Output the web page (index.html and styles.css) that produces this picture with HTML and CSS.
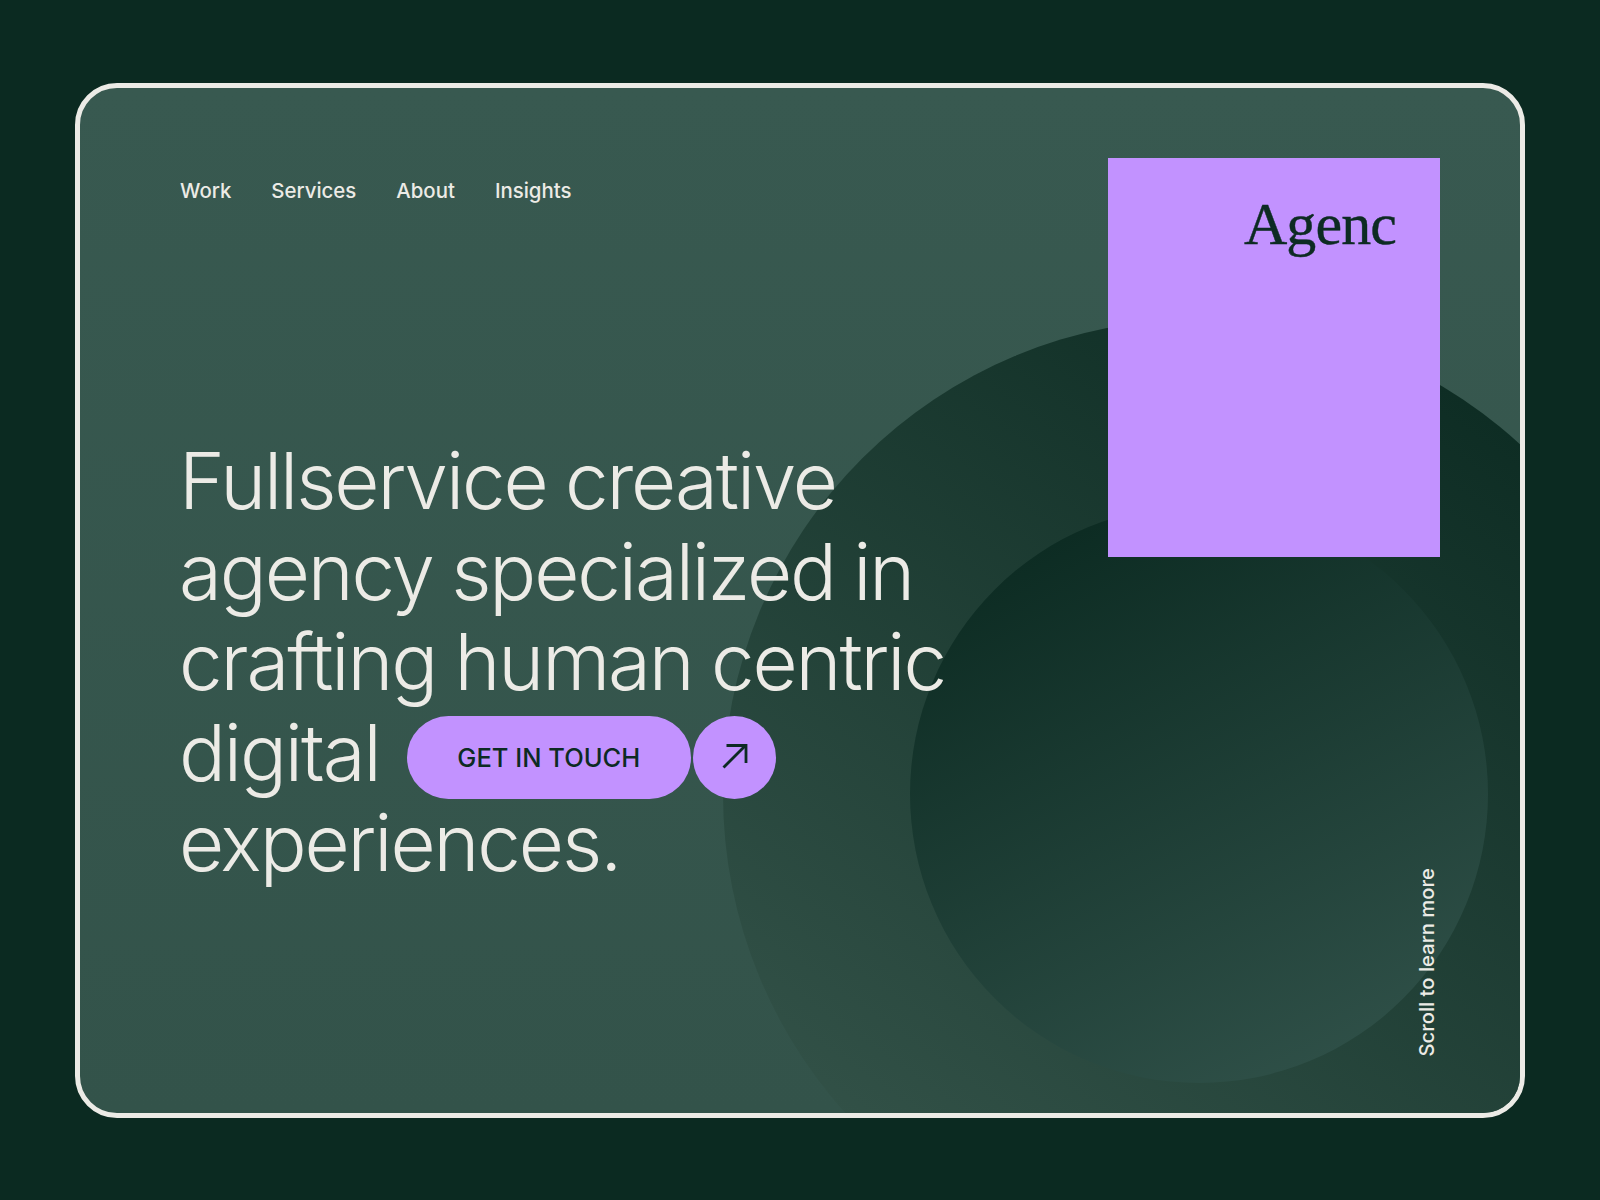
FILE: index.html
```html
<!DOCTYPE html>
<html lang="en">
<head>
  <meta charset="UTF-8" />
  <title>Agenc</title>
  <link rel="stylesheet" href="styles.css">
</head>
<body>
  <main class="card">
    <div class="circle circle-outer"></div>
    <div class="circle circle-inner"></div>

    <div class="left">
      <nav class="nav">
        <a href="#">Work</a>
        <a href="#">Services</a>
        <a href="#">About</a>
        <a href="#">Insights</a>
      </nav>
      <h1 class="headline">
        Fullservice creative agency specialized in crafting human centric digital
        <span class="cta">
          <a class="cta-label" href="#">GET IN TOUCH</a>
          <a class="cta-arrow" href="#" aria-label="Get in touch">
            <svg viewBox="0 0 83 83" width="83" height="83" fill="none" stroke="#0d2b23" stroke-width="2.8">
              <path d="M30.5 51.5 L52.5 29.5" />
              <path d="M33.5 29.5 H53 V47" />
            </svg>
          </a>
        </span>
        experiences.
      </h1>
    </div>

    <div class="right">
      <div class="logo-box">
        <div class="logo">Agenc</div>
      </div>
      <div class="scroll">Scroll to learn more</div>
    </div>
  </main>
</body>
</html>
```

FILE: styles.css
```css
html, body {
  margin: 0;
  padding: 0;
  background: #0b2a21;
  height: 100vh;
  overflow: hidden;
}

body {
  padding: 83px 75px;
  box-sizing: border-box;
  font-family: "Inter", sans-serif;
  color: #ecebe6;
}

.card {
  position: relative;
  overflow: hidden;
  box-sizing: border-box;
  height: 1035px;
  border: 5px solid #ecebe6;
  border-radius: 42px;
  background: linear-gradient(180deg, #385950, #33534a);
  padding: 70px 80px 56px 100px;
  display: flex;
  justify-content: space-between;
}

.circle {
  position: absolute;
  border-radius: 50%;
}

.circle-outer {
  left: 643px;
  top: 231px;
  width: 951px;
  height: 951px;
  background: linear-gradient(215deg, #0b2a21 8%, #35544a 92%);
}

.circle-inner {
  left: 830px;
  top: 417px;
  width: 578px;
  height: 578px;
  background: linear-gradient(155deg, #0b2a21 8%, #31524a 95%);
}

.left,
.right {
  position: relative;
  display: flex;
  flex-direction: column;
}

.nav {
  display: flex;
  gap: 40px;
  margin-top: 20px;
  font-size: 20.4px;
  font-weight: 500;
}

.nav a {
  color: inherit;
  text-decoration: none;
}

.headline {
  margin: 233px 0 0 -1px;
  width: 790px;
  font-size: 78px;
  font-weight: 300;
  line-height: 90.5px;
  letter-spacing: -2.1px;
  word-spacing: -1.5px;
}

.cta {
  display: inline-flex;
  gap: 2px;
  margin-left: 9px;
  margin-bottom: -4px;
  vertical-align: 14px;
  letter-spacing: 0;
  word-spacing: 0;
}

.cta-label,
.cta-arrow {
  height: 83px;
  background: #c292ff;
  color: #0d2b23;
  text-decoration: none;
}

.cta-label {
  display: flex;
  align-items: center;
  justify-content: center;
  width: 284px;
  border-radius: 42px;
  font-size: 25.5px;
  font-weight: 500;
}

.cta-arrow {
  width: 83px;
  border-radius: 50%;
}

.cta-arrow svg {
  display: block;
}

.right {
  width: 332px;
  justify-content: space-between;
}

.logo-box {
  box-sizing: border-box;
  height: 399px;
  padding: 30px 44px 0 0;
  background: #c292ff;
  text-align: right;
}

.logo {
  font-family: "Liberation Serif", serif;
  font-size: 60px;
  line-height: 72px;
  letter-spacing: -0.9px;
  color: #0d2b23;
  -webkit-text-stroke: 0.4px #0d2b23;
}

.scroll {
  align-self: flex-end;
  margin-right: 3px;
  writing-mode: vertical-rl;
  transform: rotate(180deg);
  font-size: 20.3px;
  font-weight: 500;
  line-height: 20px;
}
```
